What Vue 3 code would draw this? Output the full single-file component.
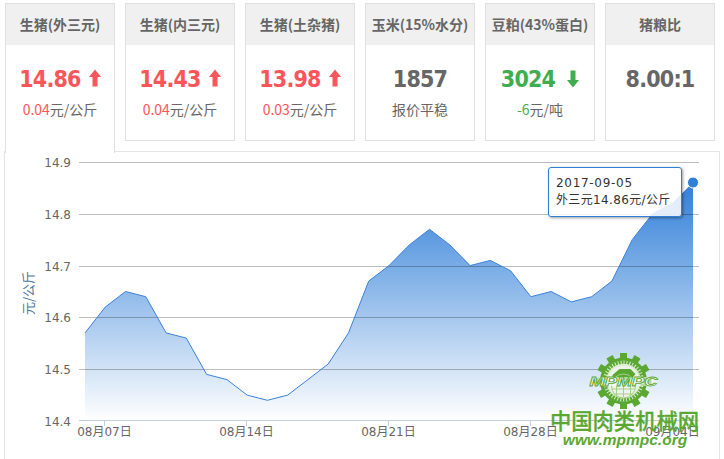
<script setup>
const cards = [
  { title: '生猪(外三元)', value: '14.86', dir: 'up', delta: '0.04', unit: '元/公斤', active: true },
  { title: '生猪(内三元)', value: '14.43', dir: 'up', delta: '0.04', unit: '元/公斤' },
  { title: '生猪(土杂猪)', value: '13.98', dir: 'up', delta: '0.03', unit: '元/公斤' },
  { title: '玉米(15%水分)', value: '1857', dir: 'flat', delta: '', unit: '报价平稳' },
  { title: '豆粕(43%蛋白)', value: '3024', dir: 'down', delta: '-6', unit: '元/吨' },
  { title: '猪粮比', value: '8.00:1', dir: 'flat', delta: '', unit: '' },
]

const values = [14.57, 14.62, 14.65, 14.64, 14.57, 14.56, 14.49, 14.48, 14.45, 14.44, 14.45, 14.48, 14.51, 14.57, 14.67, 14.7, 14.74, 14.77, 14.74, 14.7, 14.71, 14.69, 14.64, 14.65, 14.63, 14.64, 14.67, 14.75, 14.8, 14.82, 14.86]

const xAt = (i) => 85 + (i * 608) / 30
const yAt = (v) => 421 - (v - 14.4) * 518
const points = values.map((v, i) => `${xAt(i).toFixed(1)},${yAt(v).toFixed(1)}`)
const line = 'M' + points.join(' L')
const area = `${line} L693,421 L85,421 Z`

const grid = [
  { label: '14.9', y: 162.5 },
  { label: '14.8', y: 214.5 },
  { label: '14.7', y: 266.5 },
  { label: '14.6', y: 317.5 },
  { label: '14.5', y: 369.5 },
]
const ticks = [
  { label: '08月07日', x: 104.5 },
  { label: '08月14日', x: 246.5 },
  { label: '08月21日', x: 388.5 },
  { label: '08月28日', x: 530.5 },
  { label: '09月04日', x: 672.5 },
]
const gearTeeth = Array.from({ length: 12 }, (_, i) => i * 30)
</script>

<template>
  <div class="page">
    <div class="cards">
      <div v-for="c in cards" :key="c.title" class="card" :class="{ active: c.active }">
        <div class="card-title">{{ c.title }}</div>
        <div class="card-body">
          <div class="value" :class="c.dir">
            <span class="num">{{ c.value }}</span>
            <svg v-if="c.dir === 'up'" class="arrow" width="12" height="18" viewBox="0 0 12 18">
              <path d="M6 0.5 L12 8 H8.5 V17.5 H3.5 V8 H0 Z" fill="#ff5459" />
            </svg>
            <svg v-if="c.dir === 'down'" class="arrow arrow-down" width="12" height="18" viewBox="0 0 12 18">
              <path d="M6 17.5 L12 10 H8.5 V0.5 H3.5 V10 H0 Z" fill="#3fae4f" />
            </svg>
          </div>
          <div class="note">
            <span :class="c.dir">{{ c.delta }}</span>{{ c.unit }}
          </div>
        </div>
      </div>
    </div>

    <div class="panel">
      <svg class="chart" width="724" height="308" viewBox="0 151 724 308">
        <defs>
          <linearGradient id="fillGrad" gradientUnits="userSpaceOnUse" x1="0" y1="181" x2="0" y2="421">
            <stop offset="0" stop-color="#2f7ed8" />
            <stop offset="1" stop-color="#ffffff" />
          </linearGradient>
        </defs>
        <path :d="area" fill="url(#fillGrad)" />
        <line v-for="g in grid" :key="g.label" x1="79" x2="699" :y1="g.y" :y2="g.y" stroke="#000" stroke-opacity="0.26" />
        <path :d="line" fill="none" stroke="#3b82dc" />
        <line x1="79" x2="699" y1="420.5" y2="420.5" stroke="#c0d0e0" />
        <line v-for="t in ticks" :key="t.x" :x1="t.x" :x2="t.x" y1="421" y2="426" stroke="#c0d0e0" />

        <text v-for="g in grid" :key="'l' + g.label" class="axis" x="71" :y="g.y + 4.5" text-anchor="end">{{ g.label }}</text>
        <text class="axis" x="71" y="426" text-anchor="end">14.4</text>
        <text v-for="t in ticks" :key="'t' + t.x" class="axis" :x="t.x" y="436" text-anchor="middle">{{ t.label }}</text>
        <text class="ytitle" transform="translate(33 293) rotate(-90)" text-anchor="middle">元/公斤</text>

        <g transform="translate(623.5 381)">
          <g fill="#5aa832">
            <rect v-for="a in gearTeeth" :key="a" x="-3.5" y="-28" width="7" height="8" :transform="`rotate(${a})`" />
            <circle r="23.5" />
            <circle r="20.5" fill="#dcecd0" />
            <circle r="19" fill="none" stroke="#5aa832" stroke-width="3.5" stroke-dasharray="2 1" />
            <circle r="15.5" fill="#eef5e8" />
            <path d="M-11 -6 L-4 -12 L7 -12 L12 -7 L8 -2 L3 0 L-4 -3 L-11 -2 Z" />
          </g>
          <g fill="none" stroke="#a5cf8a" stroke-width="1">
            <circle r="12" cy="5" />
            <path d="M-12 8 H12 M-9 13 H9 M0 2 V16 M-7 2 V15 M7 2 V15" />
          </g>
          <rect x="-33" y="-4" width="66" height="9" fill="#fff" fill-opacity="0.55" />
          <text class="mark-logo" x="0" y="5" text-anchor="middle" textLength="68" lengthAdjust="spacingAndGlyphs">MPMPC</text>
        </g>
        <text class="mark-cn" x="624.5" y="429" text-anchor="middle">中国肉类机械网</text>
        <text class="mark-url" x="625" y="445" text-anchor="middle">www.mpmpc.org</text>

        <circle cx="693" cy="182.5" r="5.5" fill="#2f7ed8" stroke="#fff" stroke-width="1" />
      </svg>
      <div class="tooltip">
        <div class="tip-date">2017-09-05</div>
        <div class="tip-value">外三元14.86元/公斤</div>
      </div>
    </div>
  </div>
</template>

<style scoped>
.page {
  width: 724px;
  height: 459px;
  overflow: hidden;
  font-family: "Noto Sans CJK SC", "Noto Sans", sans-serif;
  color: #666;
  background: #fff;
  padding-top: 3px;
  box-sizing: border-box;
}
.cards {
  display: flex;
  gap: 10px;
  padding-left: 5px;
  height: 138px;
  align-items: flex-start;
  position: relative;
  z-index: 2;
}
.card {
  width: 110px;
  height: 138px;
  flex: none;
  box-sizing: border-box;
  border: 1px solid #e0e0e0;
  background: #fff;
  text-align: center;
}
.card.active {
  height: 150px;
  border-bottom: none;
}
.card-title {
  height: 41px;
  line-height: 41px;
  background: #f0f0f0;
  font-size: 14px;
  font-weight: 700;
  color: #666;
  white-space: nowrap;
}
.card-body {
  padding-top: 17px;
}
.value {
  height: 34px;
  line-height: 34px;
  font-family: "DejaVu Sans", "Open Sans", sans-serif;
  font-stretch: condensed;
  font-size: 23px;
  font-weight: 700;
  color: #666;
  display: flex;
  justify-content: center;
  align-items: center;
}
.num { letter-spacing: -0.8px; }
.value.up { color: #ff5459; }
.value.down { color: #3fae4f; }
.arrow { margin-left: 8px; margin-top: -3px; }
.arrow-down { margin-left: 12px; margin-top: 0; }
.note {
  margin-top: 3px;
  font-size: 14px;
  line-height: 20px;
  color: #666;
}
.note .up { color: #ff5459; }
.note .down { color: #3fae4f; }
.panel {
  position: relative;
  height: 318px;
}
.panel::before {
  content: "";
  position: absolute;
  left: 4px;
  top: 10px;
  width: 716px;
  height: 320px;
  box-sizing: border-box;
  border: 1px solid #e4e4e4;
}
.chart {
  position: absolute;
  left: 0;
  top: 10px;
  display: block;
}
.axis {
  font-family: "DejaVu Sans", "Noto Sans CJK SC", sans-serif;
  font-size: 12px;
  fill: #666;
}
.ytitle {
  font-family: "Noto Sans CJK SC", sans-serif;
  font-size: 13px;
  fill: #4d759e;
}
.mark-cn {
  font-family: "Noto Sans CJK SC", sans-serif;
  font-size: 21.3px;
  font-weight: 500;
  fill: #5aa832;
  stroke: #5aa832;
  stroke-width: 0.3px;
}
.mark-url {
  font-family: "Liberation Sans", sans-serif;
  font-size: 15.5px;
  font-weight: 700;
  font-style: italic;
  fill: #5aa832;
}
.mark-logo {
  font-family: "Liberation Sans", sans-serif;
  font-size: 13px;
  font-weight: 700;
  font-style: italic;
  fill: #fff;
  stroke: #5aa832;
  stroke-width: 0.8px;
}
.tooltip {
  position: absolute;
  left: 548px;
  top: 26px;
  width: 134px;
  height: 50px;
  box-sizing: border-box;
  border: 1px solid #2f7ed8;
  border-radius: 3px;
  background: rgba(255, 255, 255, 0.85);
  box-shadow: 1px 1px 3px rgba(0, 0, 0, 0.4);
  padding: 7px 7px;
  font-family: "DejaVu Sans", "Noto Sans CJK SC", sans-serif;
  font-size: 12px;
  line-height: 17px;
  color: #333;
  white-space: nowrap;
  z-index: 3;
}
.tip-date {
  letter-spacing: 0.7px;
}
.tip-value {
  letter-spacing: 0.35px;
}
</style>
